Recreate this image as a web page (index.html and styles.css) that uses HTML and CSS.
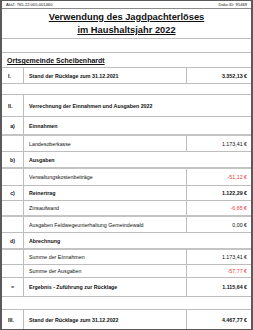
FILE: index.html
```html
<!DOCTYPE html>
<html lang="de">
<head>
<meta charset="utf-8">
<title>Verwendung des Jagdpachterlöses</title>
<link rel="stylesheet" href="styles.css">
</head>
<body>
<div class="sheet">
  <div class="row head h9">
    <span>AktZ: 765-22.005-001460</span>
    <span>Dokv-ID: 95469</span>
  </div>
  <div class="row title h30">
    <div>Verwendung des Jagdpachterlöses<br>im Haushaltsjahr 2022</div>
  </div>
  <div class="row blank h14"></div>
  <div class="row place h15"><span>Ortsgemeinde Scheibenhardt</span></div>

  <div class="row cols h16 b">
    <div class="c1 roman">I.</div>
    <div class="c2">Stand der Rücklage zum 31.12.2021</div>
    <div class="c3">3.352,13 €</div>
  </div>
  <div class="row blank h11"></div>

  <div class="row span h22 b">
    <div class="c1 roman">II.</div>
    <div class="c2">Verrechnung der Einnahmen und Ausgaben 2022</div>
  </div>
  <div class="row span h19 b thick">
    <div class="c1">a)</div>
    <div class="c2">Einnahmen</div>
  </div>
  <div class="row cols h16">
    <div class="c1"></div>
    <div class="c2">Landesoberkasse</div>
    <div class="c3">1.173,41 €</div>
  </div>
  <div class="row span h17 b thick">
    <div class="c1">b)</div>
    <div class="c2">Ausgaben</div>
  </div>
  <div class="row cols h17">
    <div class="c1"></div>
    <div class="c2">Verwaltungskostenbeiträge</div>
    <div class="c3 neg">-51,12 €</div>
  </div>
  <div class="row cols h15 b">
    <div class="c1">c)</div>
    <div class="c2">Reinertrag</div>
    <div class="c3">1.122,29 €</div>
  </div>
  <div class="row cols h16 thick">
    <div class="c1"></div>
    <div class="c2">Zinsaufwand</div>
    <div class="c3 neg">-6,65 €</div>
  </div>
  <div class="row cols h16">
    <div class="c1"></div>
    <div class="c2">Ausgaben Feldwegeunterhaltung Gemeindewald</div>
    <div class="c3">0,00 €</div>
  </div>
  <div class="row span h17 b thick">
    <div class="c1">d)</div>
    <div class="c2">Abrechnung</div>
  </div>
  <div class="row cols h15">
    <div class="c1"></div>
    <div class="c2">Summe der Einnahmen</div>
    <div class="c3">1.173,41 €</div>
  </div>
  <div class="row cols h13">
    <div class="c1"></div>
    <div class="c2">Summe der Ausgaben</div>
    <div class="c3 neg">-57,77 €</div>
  </div>
  <div class="row cols h19 b">
    <div class="c1">=</div>
    <div class="c2">Ergebnis - Zuführung zur Rücklage</div>
    <div class="c3">1.115,64 €</div>
  </div>
  <div class="row blank h13"></div>
  <div class="row cols h19 b last">
    <div class="c1 roman">III.</div>
    <div class="c2">Stand der Rücklage zum 31.12.2022</div>
    <div class="c3">4.467,77 €</div>
  </div>
</div>
</body>
</html>
```

FILE: styles.css
```css
* { box-sizing: border-box; }
html, body { margin: 0; padding: 0; background: #ffffff; }
body {
  font-family: "Liberation Sans", Arial, sans-serif;
  color: #111111;
  font-size: 5.3px;
}
.sheet {
  width: 253px;
  height: 330px;
  border-left: 2px solid #5a5a5a;
  border-right: 2px solid #5a5a5a;
  border-top: 1px solid #5a5a5a;
  border-bottom: 1px solid #5a5a5a;
}
.row {
  border-bottom: 1px solid #bdbdbd;
}
.row.thick { border-bottom: 2px solid #c4c4c4; }
.row.last { border-bottom: none; }
.h9 { height: 8px; }
.h30 { height: 30px; }
.h14 { height: 14px; }
.h15 { height: 15px; }
.h16 { height: 16px; }
.h11 { height: 11px; }
.h22 { height: 22px; }
.h19 { height: 19px; }
.h17 { height: 17px; }
.h13 { height: 13px; }

.head {
  display: flex;
  justify-content: space-between;
  align-items: center;
  padding: 0 4px;
  font-size: 4.1px;
  border-bottom: 1px solid #8a8a8a;
}
.title {
  display: flex;
  align-items: center;
  justify-content: center;
  text-align: center;
  font-weight: bold;
  font-size: 9.3px;
  line-height: 13px;
  text-decoration: underline;
}
.place {
  display: flex;
  align-items: center;
  padding-left: 5px;
  padding-top: 1px;
  font-weight: bold;
  font-size: 7px;
  text-decoration: underline;
}
.cols {
  display: grid;
  grid-template-columns: 21px 163px 65px;
}
.span {
  display: grid;
  grid-template-columns: 21px 228px;
}
.c1, .c2, .c3 {
  display: flex;
  align-items: center;
  white-space: nowrap;
}
.c1 { justify-content: center; font-weight: bold; }
.c1.roman { justify-content: flex-start; padding-left: 6px; }
.c2 { border-left: 1px solid #bdbdbd; padding-left: 5px; }
.c3 { border-left: 1px solid #bdbdbd; justify-content: flex-end; padding-right: 4px; }
.b .c2, .b .c3 { font-weight: bold; }
.neg { color: #ee3b3b; }
```
